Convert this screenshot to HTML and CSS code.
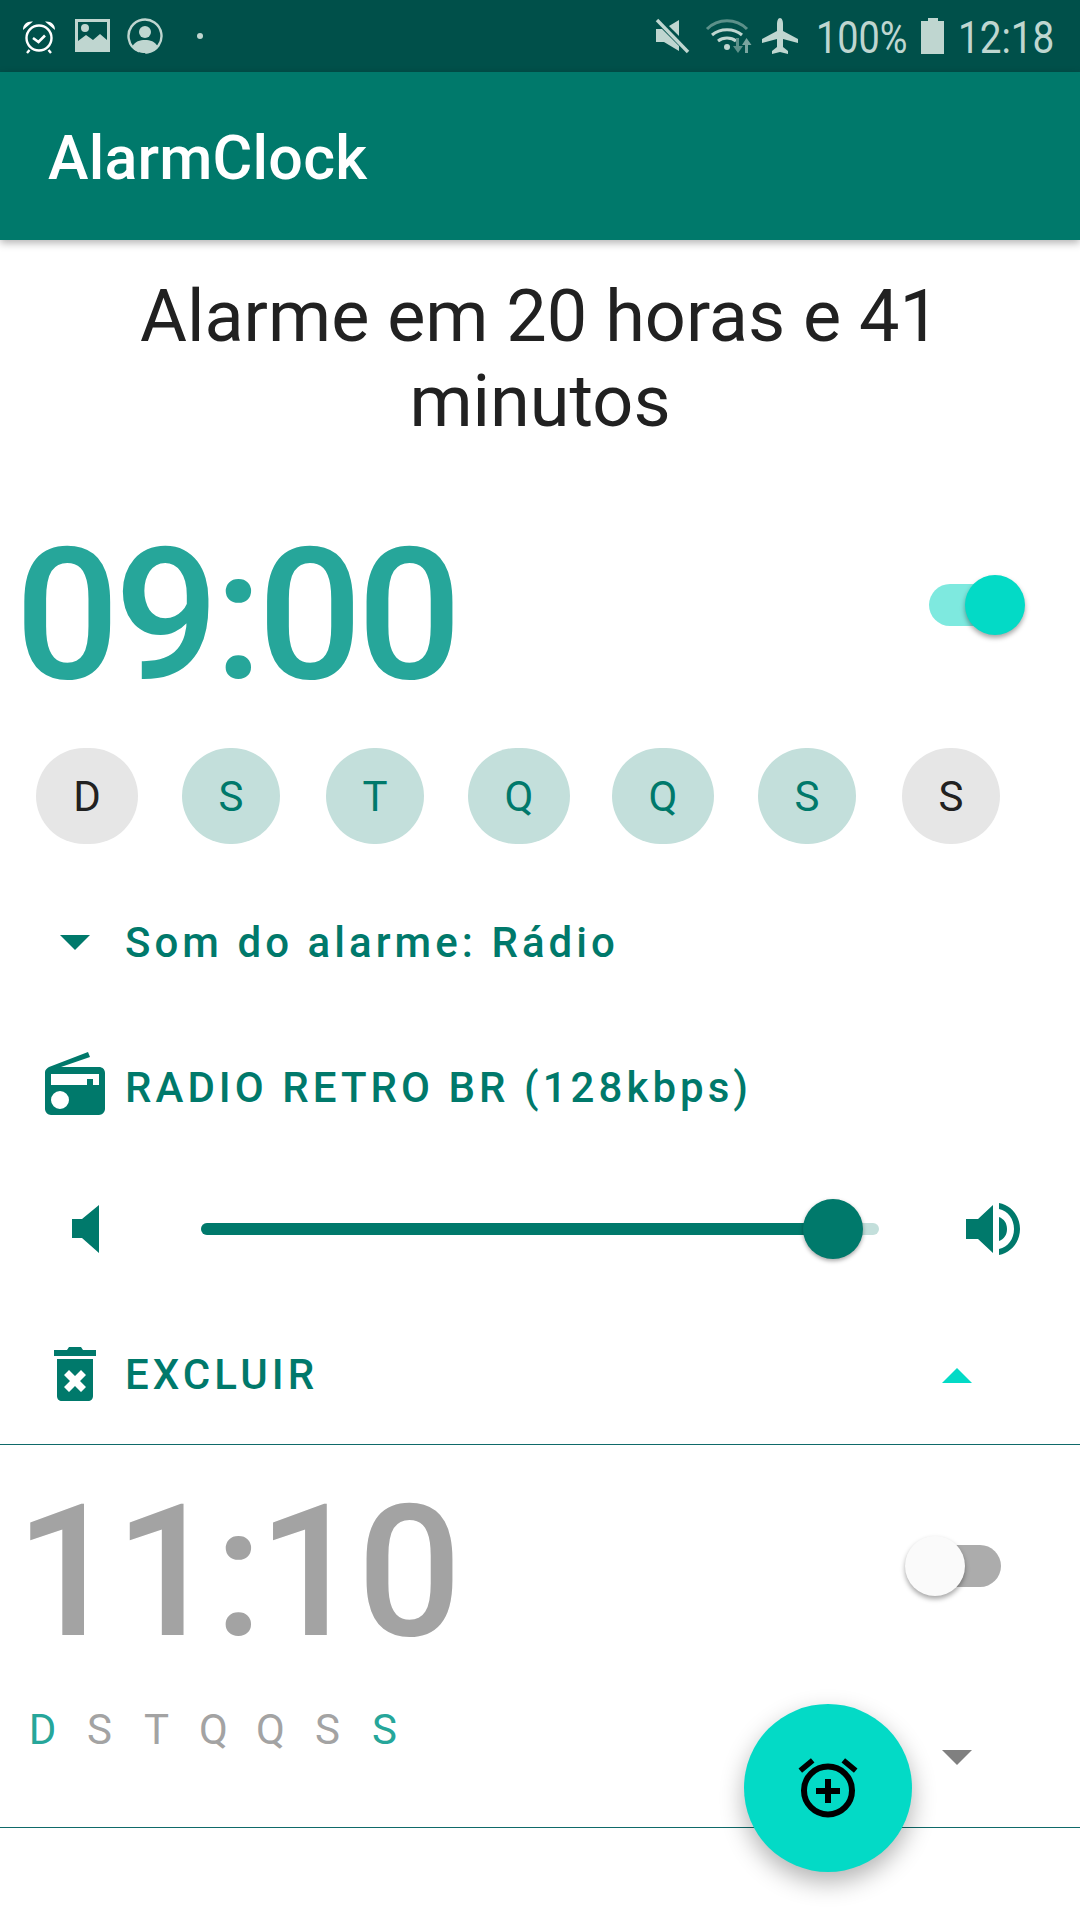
FILE: index.html
```html
<!DOCTYPE html>
<html lang="pt-BR">
<head>
<meta charset="utf-8">
<title>AlarmClock</title>
<link rel="stylesheet" href="styles.css">
</head>
<body>
<div class="phone">
  <header class="statusbar">
    <div class="status-left">
      <svg width="36" height="36" viewBox="0 0 36 36"><g fill="none" stroke="#fff" stroke-width="2.400"><circle cx="18" cy="20" r="12.500"/><path d="M12 20l5.500 4 6.500-6.500" stroke-width="2.600"/><path d="M8.500 32l-2.500 3M27.500 32l2.500 3"/></g><path d="M2 12c0-6 4-9 10-8.500zM34 12c0-6-4-9-10-8.500z" fill="#fff"/></svg>
      <svg width="36" height="36" viewBox="0 0 36 36"><path fill="#bfd6d0" fill-rule="evenodd" d="M1 1h35v33H1zM4 4v19l8-6 7 5 7-6 7 6V4zM11 6a4 4 0 1 1 0 8 4 4 0 0 1 0-8z"/></svg>
      <svg width="36" height="36" viewBox="0 0 36 36"><circle cx="18" cy="18" r="16.500" fill="none" stroke="#bfd6d0" stroke-width="2.400" stroke-dasharray="80 6" transform="rotate(170 18 18)"/><circle cx="18" cy="14" r="6" fill="#bfd6d0"/><path d="M5 29c3-6 8-7 13-7s10 1 13 7c-3 4-8 6-13 6s-10-2-13-6z" fill="#bfd6d0"/></svg>
      <span class="dot"></span>
    </div>
    <div class="status-right">
      <svg class="s-mute" width="36" height="36" viewBox="0 0 36 36"><path fill="#bfd6d0" d="M2 11h8L25 2v31L10 24H2z"/><path d="M3 1l32 32" stroke="#00504a" stroke-width="7"/><path d="M3 2l31 32" stroke="#bfd6d0" stroke-width="3.400"/></svg>
      <svg class="s-wifi" width="48" height="36" viewBox="0 0 48 36"><path d="M2 11c11-11 29-11 40 0" fill="none" stroke="#5c918a" stroke-width="3"/><path d="M7 17c8-7 22-7 30 0M13 23c5-4 13-4 18 0" fill="none" stroke="#bfd6d0" stroke-width="3"/><circle cx="22" cy="29" r="3" fill="#bfd6d0"/><path d="M31 20h3v8h4l-5 7-5-7h3z" fill="#5c918a"/><path d="M43 35h-3v-8h-3l4.500-7 5 7h-3.500z" fill="#7aa59f"/></svg>
      <svg class="s-plane" width="38" height="36" viewBox="0 0 38 36"><path fill="#bfd6d0" d="M19 0c2 0 3 3 3 6v7l15 8v4l-15-4v8l5 4v3l-8-2-8 2v-3l5-4v-8L1 25v-4l15-8V6c0-3 1-6 3-6z"/></svg>
      <span class="status-text pct">100%</span>
      <svg class="s-battery" width="24" height="36" viewBox="0 0 24 36"><path fill="#bfd6d0" d="M7 0h10v3h6v33H0V3h7z"/></svg>
      <span class="status-text clock">12:18</span>
    </div>
  </header>
  <div class="appbar">AlarmClock</div>
  <main class="content">
    <h1 class="next">Alarme em 20 horas e 41 minutos</h1>

    <section class="alarm open">
      <div class="time-row">
        <div class="time on">09:00</div>
        <div class="switch switch-on"><span class="knob"></span></div>
      </div>
      <div class="days">
        <span class="chip chip-off wide">D</span>
        <span class="chip">S</span>
        <span class="chip">T</span>
        <span class="chip wide">Q</span>
        <span class="chip wide">Q</span>
        <span class="chip">S</span>
        <span class="chip chip-off">S</span>
      </div>
      <div class="row sound">
        <span class="icon-slot"><svg width="30" height="15" viewBox="0 0 30 15"><path d="M0 0h30L15 15z" fill="#00796b"/></svg></span>
        <span class="label">Som do alarme: Rádio</span>
      </div>
      <div class="row radio">
        <span class="icon-slot radio-icon"><svg width="60" height="63" viewBox="0 0 60 63"><path fill="#00796b" fill-rule="evenodd" d="M4 15L43 0l2 5-29 10h38c3 0 6 2 6 6v36c0 3-3 6-6 6H6c-3 0-6-3-6-6V20c0-2 2-4 4-5zM6 22v11h36v-6h6v6h6V22zM15 39a9 9 0 1 0 0 18 9 9 0 0 0 0-18z"/></svg></span>
        <span class="label">RADIO RETRO BR (128kbps)</span>
      </div>
      <div class="volume">
        <svg class="vol-low" width="27" height="48" viewBox="0 0 27 48"><path fill="#00796b" d="M0 14h10L27 0v48L10 33H0z"/></svg>
        <div class="track"><div class="track-fill"></div><span class="thumb"></span></div>
        <svg class="vol-high" width="54" height="52" viewBox="0 0 54 52"><path fill="#00796b" d="M0 16h12L27 2v48L12 36H0z"/><path fill="#00796b" d="M33 0C45 2 54 13 54 26S45 50 33 52v-6C42 44 48 36 48 26S42 8 33 6zM33 14C38 16 41 20 41 26S38 36 33 38z"/></svg>
      </div>
      <div class="row delete">
        <span class="icon-slot"><svg width="42" height="54" viewBox="0 0 42 54"><path fill="#00796b" d="M0 3h13l2-3h12l2 3h13v6H0z"/><path fill="#00796b" fill-rule="evenodd" d="M3 12h36v37c0 3-2 5-5 5H8c-3 0-5-2-5-5zM15 23l-5 5 6 6-6 6 5 5 6-6 6 6 5-5-6-6 6-6-5-5-6 6z"/></svg></span>
        <span class="label">EXCLUIR</span>
        <svg class="chev" width="30" height="15" viewBox="0 0 30 15"><path d="M0 15h30L15 0z" fill="#03dac6"/></svg>
      </div>
    </section>

    <section class="alarm closed">
      <div class="time-row">
        <div class="time off">11:10</div>
        <div class="switch switch-off"><span class="knob"></span></div>
      </div>
      <div class="days-row">
        <div class="days-text">
          <span class="d-on">D</span><span>S</span><span>T</span><span>Q</span><span>Q</span><span>S</span><span class="d-on">S</span>
        </div>
        <svg class="chev" width="30" height="15" viewBox="0 0 30 15"><path d="M0 0h30L15 15z" fill="#808080"/></svg>
      </div>
    </section>
  </main>
  <button class="fab" type="button" aria-label="Adicionar alarme">
    <svg width="60" height="60" viewBox="0 0 60 60"><path d="M2.300 12.700L14.700 2.300M57.700 12.700L45.300 2.300" stroke="#000" stroke-width="5.500" fill="none"/><circle cx="30" cy="32.500" r="24" fill="none" stroke="#000" stroke-width="6"/><path d="M30 21v24M18 33h24" stroke="#000" stroke-width="6"/></svg>
  </button>
</div>
</body>
</html>
```
FILE: styles.css
```css
* { box-sizing: border-box; }
html, body { margin: 0; padding: 0; }
body { width: 1080px; height: 1920px; overflow: hidden; background: #fff; font-family: Roboto, sans-serif; }
.phone { position: relative; width: 1080px; height: 1920px; background: #fff; }

.statusbar { height: 72px; background: #00504a; display: flex; justify-content: space-between; align-items: center; padding: 0 26px 0 21px; }
.status-left { display: flex; align-items: center; gap: 17px; }
.status-right { display: flex; align-items: center; }
.dot { width: 6px; height: 6px; border-radius: 50%; background: #bfd6d0; margin-left: 17px; }
.status-text { font-size: 45px; line-height: 50px; margin-top: 3px; color: #bfd6d0; font-weight: 400; white-space: nowrap; transform-origin: left center; }
.s-wifi { margin-left: 15px; }
.s-plane { margin-left: 8px; }
.pct { width: 92px; margin-left: 17px; transform: scaleX(.84); }
.s-battery { margin-left: 13px; }
.clock { width: 96px; margin-left: 13px; transform: scaleX(.86); }

.appbar { height: 168px; background: #00796b; color: #fff; font-size: 61px; letter-spacing: .2px; line-height: 72px; padding: 50px 0 0 48px; font-weight: 500; box-shadow: 0 3px 8px rgba(0,0,0,.3); position: relative; }

.next { margin: 0; padding: 34px 130px 0; font-size: 72px; font-weight: 400; line-height: 85px; text-align: center; color: #212121; }

.alarm { border-bottom: 1px solid #0f6a6a; }
.time-row { display: flex; align-items: center; justify-content: space-between; padding: 0 79px 0 15px; }
.time { font-size: 184px; letter-spacing: -5px; font-weight: 500; line-height: 224px; }
.time.on { color: #26a69a; }
.time.off { color: #a3a3a3; }

.switch { position: relative; width: 72px; height: 42px; border-radius: 21px; }
.switch-on { background: #7ee9df; margin-bottom: 20px; }
.switch-off { background: #acacac; margin-bottom: 13px; }
.knob { position: absolute; top: -9px; width: 60px; height: 60px; border-radius: 50%; box-shadow: 0 3px 5px rgba(0,0,0,.35); }
.switch-on .knob { right: -24px; background: #03dac6; }
.switch-off .knob { left: -24px; background: #fafafa; }

.open { padding-top: 59px; }
.closed { padding-top: 15px; }
.days { display: flex; align-items: center; gap: 44px; margin: 21px 0 0 36px; }
.chip { width: 98px; height: 96px; border-radius: 48px; display: flex; align-items: center; justify-content: center; background: #c3dfdb; color: #00796b; font-size: 42px; }
.chip.wide { width: 102px; }
.chip:nth-child(3), .chip:nth-child(7) { margin-left: 2px; }
.chip:nth-child(5) { margin-left: -2px; }
.chip-off { background: #e6e6e6; color: #212121; }

.row { display: flex; align-items: center; position: relative; padding-left: 45px; }
.icon-slot { width: 60px; display: flex; justify-content: center; margin-right: 20px; }
.label { font-size: 42px; font-weight: 500; color: #00796b; letter-spacing: 4.050px; }
.sound { height: 60px; margin-top: 68px; }
.radio { height: 70px; margin-top: 80px; }
.radio-icon { margin-bottom: 8px; }
.volume { display: flex; align-items: center; margin-top: 77px; padding-left: 72px; height: 60px; }
.track { position: relative; width: 678px; height: 12px; border-radius: 6px; background: #c3dfdb; margin-left: 102px; }
.track-fill { width: 634px; height: 12px; border-radius: 6px; background: #00796b; }
.thumb { position: absolute; top: -24px; left: 602px; width: 60px; height: 60px; border-radius: 50%; background: #00796b; box-shadow: 0 2px 4px rgba(0,0,0,.35); }
.vol-high { margin-left: 87px; }
.delete { height: 60px; margin-top: 85px; margin-bottom: 40px; }
.delete .chev { position: absolute; left: 942px; top: 24px; }

.days-row { display: flex; align-items: flex-start; position: relative; height: 157px; margin-top: -14px; padding: 39px 0 0 14px; }
.days-text { display: flex; font-size: 42px; line-height: 42px; color: #a3a3a3; }
.days-text span { width: 57px; text-align: center; }
.d-on { color: #26a69a; }
.days-row .chev { position: absolute; left: 942px; top: 80px; }

.fab { position: absolute; left: 744px; top: 1704px; width: 168px; height: 168px; border: 0; border-radius: 50%; background: #03dac6; padding: 0; display: flex; align-items: center; justify-content: center; box-shadow: 0 10px 24px rgba(0,0,0,.3); }
```
